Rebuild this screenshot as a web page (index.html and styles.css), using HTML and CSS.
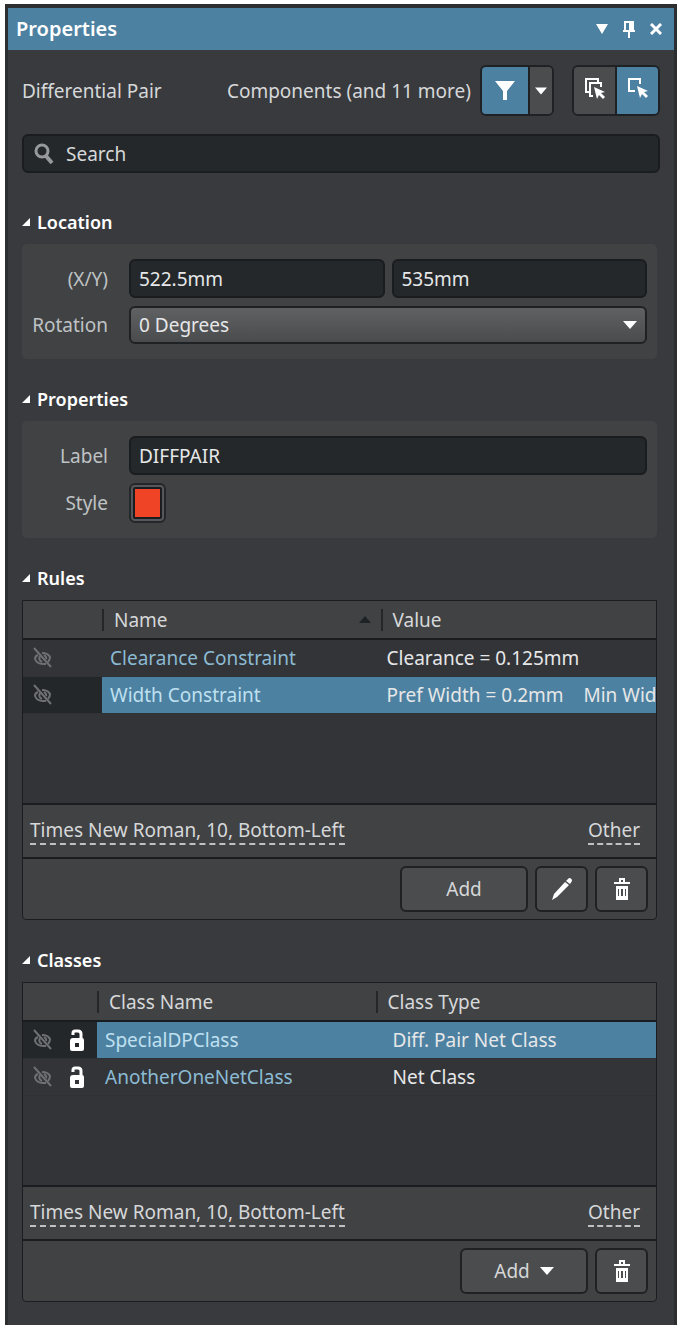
FILE: index.html
```html
<!DOCTYPE html>
<html lang="en">
<head>
    <meta charset="UTF-8">
    <meta name="viewport" content="width=device-width, initial-scale=1.0">
    <title>Properties</title>
    <link rel="stylesheet" href="styles.css">
</head>
<body>
    <!-- Shared icons -->
    <svg class="icon-defs" aria-hidden="true">
        <symbol id="icon-hidden" viewBox="0 0 20 22">
            <path d="M5 8Q2 9 2 12Q4 17 10 17L13 17M9 6Q15 6 17 10Q17 13 15 15" fill="none" stroke="currentColor" stroke-width="2"/>
            <path d="M7 9Q5 13 9 15M11 8Q14 10 13 12" fill="none" stroke="currentColor" stroke-width="2"/>
            <path d="M1 1 18 20" stroke="currentColor" stroke-width="2"/>
        </symbol>
        <symbol id="icon-unlock" viewBox="0 0 14 22">
            <path d="M3 6V4Q3 2 5 2H8Q11 2 11 5V11" fill="none" stroke="currentColor" stroke-width="3"/>
            <path fill-rule="evenodd" d="M3 9H12Q14 9 14 11V20Q14 22 12 22H2Q0 22 0 20V12Q0 9 3 9ZM5 14V18H9V14Z" fill="currentColor"/>
        </symbol>
        <symbol id="icon-trash" viewBox="0 0 16 22">
            <path d="M6 4V1H10V4" fill="none" stroke="currentColor" stroke-width="2"/>
            <path d="M0 4H16V6H0Z" fill="currentColor"/>
            <path fill-rule="evenodd" d="M2 8H14V22H2ZM4 11V18H5V11ZM7 11V18H9V11ZM11 11V18H12V11Z" fill="currentColor"/>
        </symbol>
        <symbol id="icon-down" viewBox="0 0 14 8">
            <path d="M0 0H14L7 8Z" fill="currentColor"/>
        </symbol>
    </svg>

    <main class="panel">
        <header class="title-bar">
            <h1>Properties</h1>
            <div class="window-buttons">
                <button type="button" aria-label="Panel menu"><svg width="12" height="10" viewBox="0 0 12 10"><path d="M0 0H12L6 10Z" fill="currentColor"/></svg></button>
                <button type="button" aria-label="Pin"><svg width="12" height="17" viewBox="0 0 12 17"><path fill-rule="evenodd" d="M1 0H11V9H12V11H7V17H5V11H0V9H1ZM3 2V9H6V2Z" fill="currentColor"/></svg></button>
                <button type="button" aria-label="Close"><svg width="12" height="12" viewBox="0 0 12 12"><path d="M1 1 11 11M11 1 1 11" stroke="currentColor" stroke-width="3"/></svg></button>
            </div>
        </header>

        <div class="content">
            <div class="toolbar">
                <span>Differential Pair</span>
                <span class="filter-text">Components (and 11 more)</span>
                <div class="button-group filter-group">
                    <button type="button" class="active" aria-label="Filter"><svg width="20" height="19" viewBox="0 0 20 19"><path d="M0 0H20L12 10V19H8V10Z" fill="currentColor"/></svg></button>
                    <button type="button" aria-label="Filter options"><svg width="12" height="8"><use href="#icon-down"/></svg></button>
                </div>
                <div class="button-group select-group">
                    <button type="button" aria-label="Select all matching"><svg width="22" height="24" viewBox="0 0 22 24"><path d="M5 15H2V2H14V5" fill="none" stroke="currentColor" stroke-width="2"/><path d="M9 19H6V6H17V10" fill="none" stroke="currentColor" stroke-width="2"/><path d="M10 10 21 15 17 16 21 20 19 22 15 18 13 22Z" fill="currentColor"/></svg></button>
                    <button type="button" class="active" aria-label="Select only"><svg width="22" height="24" viewBox="0 0 22 24"><path d="M8 14H2V2H13V7" fill="none" stroke="currentColor" stroke-width="2"/><path d="M10 9 21 14 17 15 21 19 19 21 15 17 13 21Z" fill="currentColor"/></svg></button>
                </div>
            </div>

            <label class="search">
                <svg width="20" height="22" viewBox="0 0 20 22"><circle cx="8" cy="8" r="6" fill="none" stroke="currentColor" stroke-width="3"/><path d="M12 13 18 20" stroke="currentColor" stroke-width="4"/></svg>
                <input type="search" placeholder="Search" aria-label="Search">
            </label>

            <section>
                <h2>Location</h2>
                <div class="card">
                    <div class="field">
                        <label for="locX">(X/Y)</label>
                        <div class="pair">
                            <input type="text" id="locX" value="522.5mm">
                            <input type="text" id="locY" value="535mm" aria-label="Y">
                        </div>
                    </div>
                    <div class="field">
                        <label for="rotation">Rotation</label>
                        <div class="select-wrap">
                            <select id="rotation">
                                <option>0 Degrees</option>
                            </select>
                            <svg width="14" height="8"><use href="#icon-down"/></svg>
                        </div>
                    </div>
                </div>
            </section>

            <section>
                <h2>Properties</h2>
                <div class="card">
                    <div class="field">
                        <label for="label">Label</label>
                        <input type="text" id="label" value="DIFFPAIR">
                    </div>
                    <div class="field">
                        <label for="style">Style</label>
                        <input type="color" id="style" value="#f04426">
                    </div>
                </div>
            </section>

            <section>
                <h2>Rules</h2>
                <div class="grid-box">
                    <div class="table-area">
                        <table class="rules">
                            <thead>
                                <tr>
                                    <th class="state-col"></th>
                                    <th class="name-col"><span class="sorted">Name <svg width="12" height="7" viewBox="0 0 12 7"><path d="M6 0 12 7H0Z" fill="currentColor"/></svg></span></th>
                                    <th><span>Value</span></th>
                                </tr>
                            </thead>
                            <tbody>
                                <tr>
                                    <td class="state"><svg width="20" height="22"><use href="#icon-hidden"/></svg></td>
                                    <td class="name">Clearance Constraint</td>
                                    <td>Clearance = 0.125mm</td>
                                </tr>
                                <tr class="selected">
                                    <td class="state"><svg width="20" height="22"><use href="#icon-hidden"/></svg></td>
                                    <td class="name">Width Constraint</td>
                                    <td>Pref Width = 0.2mm    Min Wid</td>
                                </tr>
                            </tbody>
                        </table>
                    </div>
                    <div class="links">
                        <a href="#">Times New Roman, 10, Bottom-Left</a>
                        <a href="#">Other</a>
                    </div>
                    <div class="actions">
                        <button type="button" class="btn wide">Add</button>
                        <button type="button" class="btn" aria-label="Edit"><svg width="20" height="22" viewBox="0 0 20 22"><path d="M0 22 2 16 13 4 17 7 5 19ZM14 3 17 0Q20 0 20 3L18 6Z" fill="currentColor"/></svg></button>
                        <button type="button" class="btn" aria-label="Delete"><svg width="16" height="22"><use href="#icon-trash"/></svg></button>
                    </div>
                </div>
            </section>

            <section>
                <h2>Classes</h2>
                <div class="grid-box">
                    <div class="table-area">
                        <table class="classes">
                            <thead>
                                <tr>
                                    <th class="state-col"></th>
                                    <th class="name-col"><span>Class Name</span></th>
                                    <th><span>Class Type</span></th>
                                </tr>
                            </thead>
                            <tbody>
                                <tr class="selected">
                                    <td class="state"><svg width="20" height="22"><use href="#icon-hidden"/></svg><svg class="lock" width="14" height="22"><use href="#icon-unlock"/></svg></td>
                                    <td class="name">SpecialDPClass</td>
                                    <td>Diff. Pair Net Class</td>
                                </tr>
                                <tr>
                                    <td class="state"><svg width="20" height="22"><use href="#icon-hidden"/></svg><svg class="lock" width="14" height="22"><use href="#icon-unlock"/></svg></td>
                                    <td class="name">AnotherOneNetClass</td>
                                    <td>Net Class</td>
                                </tr>
                            </tbody>
                        </table>
                    </div>
                    <div class="links">
                        <a href="#">Times New Roman, 10, Bottom-Left</a>
                        <a href="#">Other</a>
                    </div>
                    <div class="actions">
                        <button type="button" class="btn wide">Add <svg width="14" height="8"><use href="#icon-down"/></svg></button>
                        <button type="button" class="btn" aria-label="Delete"><svg width="16" height="22"><use href="#icon-trash"/></svg></button>
                    </div>
                </div>
            </section>
        </div>
    </main>
</body>
</html>
```

FILE: styles.css
```css
/* Reset styles */
* {
    margin: 0;
    padding: 0;
    box-sizing: border-box;
}

body {
    padding: 4px 5px;
    background: #fff;
    color: #d6d8d9;
    font-family: "Noto Sans", sans-serif;
    font-size: 19px;
    line-height: 28px;
}

button,
input,
select {
    font: inherit;
    color: inherit;
}

button {
    display: flex;
    align-items: center;
    justify-content: center;
    border: none;
    background: none;
    color: #fff;
    cursor: pointer;
}

svg {
    display: block;
    flex: none;
}

.icon-defs {
    position: absolute;
    width: 0;
    height: 0;
}

.panel {
    border: 3px solid #2d2e30;
    border-top-width: 4px;
    border-bottom: none;
    background: #393a3e;
}

/* Title bar */
.title-bar {
    display: flex;
    align-items: center;
    justify-content: space-between;
    height: 42px;
    padding: 0 12px 0 8px;
    background: #4d81a1;
    color: #fff;
}

.title-bar h1 {
    font-size: 20px;
    font-weight: 600;
}

.window-buttons {
    display: flex;
    align-items: center;
    gap: 15px;
}

.content {
    padding: 15px 14px 23px;
}

/* Toolbar */
.toolbar {
    display: flex;
    align-items: center;
    margin-bottom: 18px;
}

.filter-text {
    margin-left: auto;
}

.button-group {
    display: flex;
    height: 51px;
    border: 2px solid #1f2225;
    border-radius: 6px;
    overflow: hidden;
}

.button-group button {
    background: #4b4c4e;
}

.button-group button.active {
    background: #4d81a1;
}

.button-group button + button {
    border-left: 2px solid #1f2225;
}

.filter-group {
    width: 74px;
    margin-left: 9px;
}

.filter-group .active {
    flex: 1;
}

.filter-group button + button {
    width: 24px;
}

.select-group {
    width: 88px;
    margin-left: 18px;
}

.select-group button {
    flex: 1;
    padding-bottom: 4px;
}

/* Text boxes */
.search,
input[type="text"] {
    width: 100%;
    min-width: 0;
    height: 39px;
    border: 2px solid #1a1d20;
    border-radius: 6px;
    background: #24282b;
    color: #e6e7e8;
}

.search {
    display: flex;
    align-items: center;
    gap: 12px;
    padding: 0 10px;
    color: #97999b;
}

.search input {
    flex: 1;
    min-width: 0;
    border: none;
    outline: none;
    background: none;
}

.search input::placeholder {
    color: #d6d8d9;
}

input[type="text"] {
    padding: 0 8px;
}

/* Sections */
section {
    margin: 26px 3px 0 0;
}

.search + section {
    margin-top: 35px;
}

h2 {
    display: flex;
    align-items: center;
    gap: 7px;
    margin-bottom: 8px;
    color: #fff;
    font-size: 18px;
    font-weight: 600;
    line-height: 28px;
}

h2::before {
    content: "";
    width: 8px;
    height: 8px;
    background: #fff;
    clip-path: polygon(100% 0, 100% 100%, 0 100%);
}

.card {
    display: grid;
    gap: 8px;
    padding: 15px 10px 15px 0;
    border-radius: 5px;
    background: #414244;
}

.field {
    display: grid;
    grid-template-columns: 86px 1fr;
    align-items: center;
    gap: 21px;
}

.field label {
    color: #bfc2c4;
    text-align: right;
}

.pair {
    display: grid;
    grid-template-columns: 1fr 1fr;
    gap: 7px;
}

.select-wrap {
    position: relative;
}

.select-wrap select {
    display: block;
    width: 100%;
    height: 38px;
    padding: 0 8px;
    border: 2px solid #1f2225;
    border-radius: 6px;
    appearance: none;
    background: linear-gradient(#606163, #4a4b4d);
    color: #e6e7e8;
}

.select-wrap svg {
    position: absolute;
    top: 15px;
    right: 10px;
    color: #fff;
    pointer-events: none;
}

input[type="color"] {
    width: 37px;
    height: 40px;
    padding: 2px;
    border: 2px solid #24272a;
    border-radius: 6px;
    appearance: none;
    background: #55575a;
}

input[type="color"]::-webkit-color-swatch-wrapper {
    padding: 0;
}

input[type="color"]::-webkit-color-swatch {
    border: 2px solid #1a1d20;
    border-radius: 2px;
}

/* Tables */
.grid-box {
    border: 1px solid #1a1d20;
    border-radius: 0 0 4px 4px;
    background: #414244;
}

.table-area {
    height: 204px;
    border-bottom: 2px solid #1a1d20;
    background: #333438;
    overflow: hidden;
}

table {
    width: 100%;
    table-layout: fixed;
    border-collapse: collapse;
}

th {
    height: 38px;
    border-bottom: 2px solid #1a1d20;
    background: #414244;
    font-weight: 400;
    text-align: left;
}

th span {
    display: block;
    height: 22px;
    padding-left: 10px;
    border-left: 2px solid #242629;
    line-height: 22px;
}

th .sorted {
    display: flex;
    align-items: center;
    justify-content: space-between;
    padding-right: 10px;
    color: #d6d8d9;
}

.sorted svg {
    color: #1f2225;
}

td {
    height: 37px;
    padding-left: 8px;
    border-bottom: 1px solid #2f3235;
    color: #e6e7e8;
    line-height: 28px;
    overflow: hidden;
    white-space: pre;
}

.name {
    color: #8bbbd3;
}

.rules .state-col {
    width: 79px;
}

.rules td:last-child {
    padding-left: 6px;
}

.classes .state-col {
    width: 74px;
}

.name-col {
    width: 44%;
}

.classes td:last-child {
    padding-left: 17px;
}

td.state {
    padding-left: 10px;
    color: #6e7073;
    line-height: 22px;
}

.state svg {
    display: inline-block;
    vertical-align: top;
}

.state .lock {
    margin-left: 17px;
    color: #fff;
}

.selected td {
    background: #4d81a1;
}

.selected .name {
    color: #bfe0f0;
}

.selected .state {
    background: #24272a;
}

.links {
    display: flex;
    align-items: center;
    justify-content: space-between;
    height: 54px;
    padding: 0 16px 0 7px;
    border-bottom: 2px solid #1a1d20;
}

.links a {
    border-bottom: 2px dashed #bfc2c4;
    color: #d6d8d9;
    line-height: 26px;
    text-decoration: none;
}

.actions {
    display: flex;
    justify-content: flex-end;
    gap: 7px;
    padding: 7px 8px;
}

.btn {
    width: 53px;
    height: 46px;
    border: 2px solid #1f2225;
    border-radius: 6px;
    background: #4b4c4e;
}

.btn.wide {
    gap: 10px;
    width: 128px;
    color: #d6d8d9;
}

.btn.wide svg {
    color: #fff;
}
```
